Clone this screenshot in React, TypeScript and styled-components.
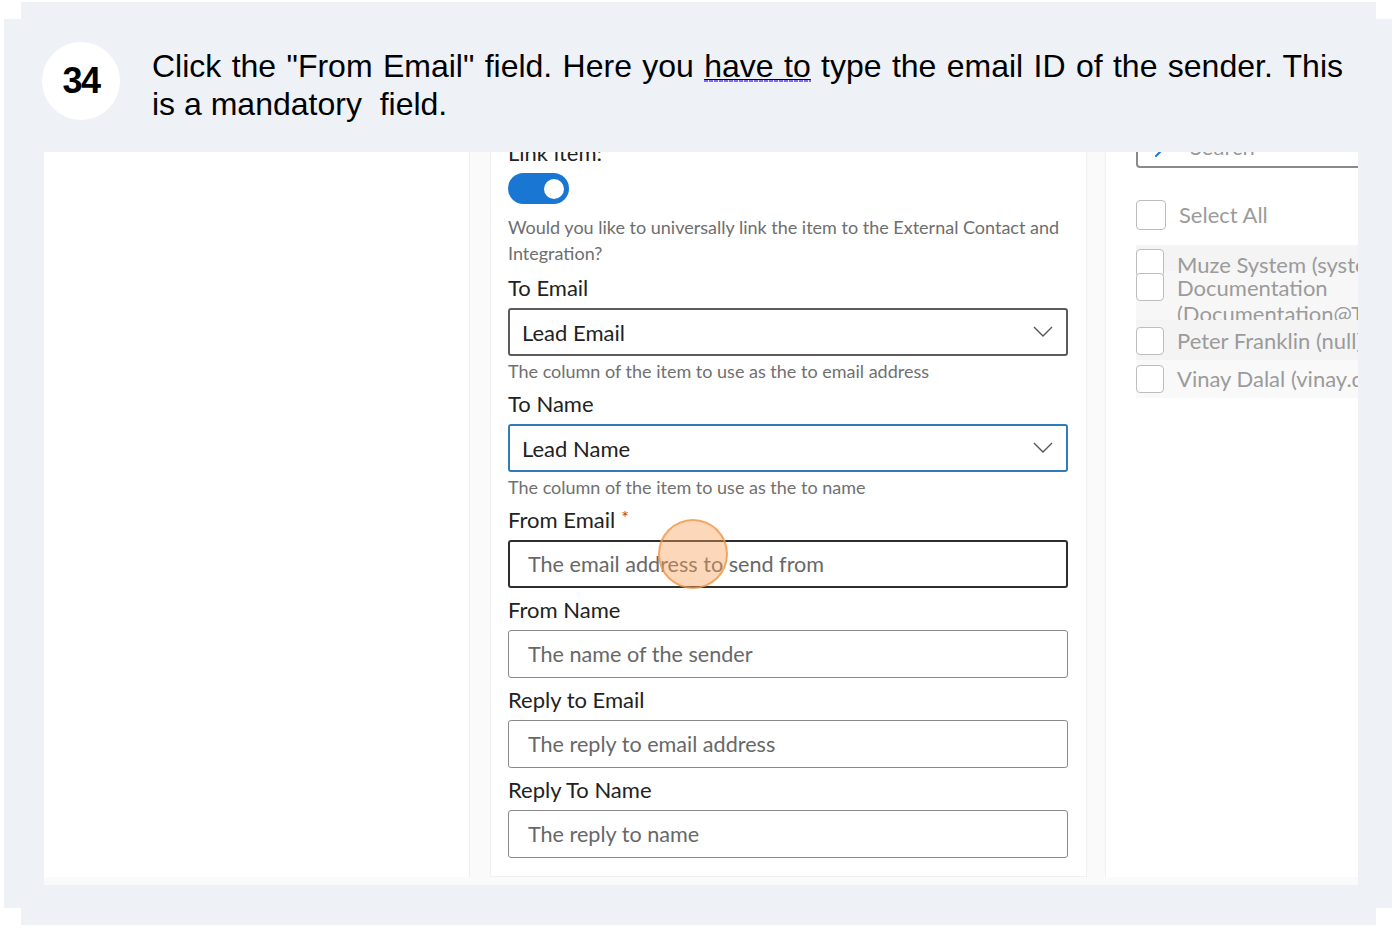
import styled, { createGlobalStyle } from "styled-components"

const GlobalStyle = createGlobalStyle`
    html, body {
        margin: 0;
        padding: 0;
        background: #fff;
    }
    body {
        font-family: Lato, "Liberation Sans", sans-serif;
    }
`

const Backdrop = styled.div`
    width: 1355px;
    margin: 2px 0 0 21px;
    padding: 17px 0;
    background: #eef2f7;
`

const Frame = styled.div`
    margin: 0 -16px 0 -17px;
    height: 889px;
    background: #eef2f7;
    display: flex;
    flex-direction: column;
`

const Header = styled.div`
    height: 133px;
    box-sizing: border-box;
    padding: 23px 49px 0 38px;
    display: flex;
    align-items: flex-start;
    gap: 32px;
`

const StepBadge = styled.div`
    width: 78px;
    height: 78px;
    flex-shrink: 0;
    border-radius: 50%;
    background: #fff;
    display: flex;
    align-items: center;
    justify-content: center;
    font-family: "Liberation Sans", Arial, sans-serif;
    font-weight: bold;
    font-size: 36px;
    letter-spacing: -1.5px;
    color: #000;
`

const Instruction = styled.p`
    flex: 1;
    margin: 5px 0 0;
    font-family: "Liberation Sans", Arial, sans-serif;
    font-size: 32px;
    line-height: 38px;
    text-align: justify;
    color: #000;
`

const Marked = styled.span`
    text-decoration: underline;
    text-decoration-thickness: 1px;
    text-underline-offset: 2px;
    background-image: repeating-linear-gradient(90deg, #7b6cf2 0 4px, transparent 4px 5px);
    background-repeat: no-repeat;
    background-size: 100% 3px;
    background-position: 0 calc(100% - 2px);
`

const Shot = styled.div`
    margin: 0 34px 0 40px;
    height: 733px;
    overflow: hidden;
    background: #fafafa;
    display: flex;
    align-items: flex-start;
`

const LeftPanel = styled.div`
    width: 426px;
    height: 725px;
    flex-shrink: 0;
    box-sizing: border-box;
    background: #fff;
    border-right: 1px solid #efefef;
`

const FormPanel = styled.div`
    width: 597px;
    height: 725px;
    flex-shrink: 0;
    margin-left: 20px;
    box-sizing: border-box;
    background: #fff;
    border: 1px solid #f0f0f0;
    border-top: none;
    padding: 0 18px 0 17px;
    overflow: hidden;
`

const Form = styled.div`
    margin-top: -21px;
    display: flex;
    flex-direction: column;
`

const Label = styled.div`
    font-size: 22px;
    line-height: 24px;
    color: #222;
    margin: 10px 0 8px;
`

const Required = styled.span`
    color: #c0392b;
    font-size: 18px;
    vertical-align: top;
    margin-left: 6px;
    line-height: 18px;
`

const Toggle = styled.div`
    width: 61px;
    height: 31px;
    box-sizing: border-box;
    border-radius: 16px;
    background: #1976d2;
    display: flex;
    align-items: center;
    justify-content: flex-end;
    padding-right: 5px;
`

const Knob = styled.span`
    width: 20px;
    height: 20px;
    border-radius: 50%;
    background: #fff;
`

const Description = styled.div`
    margin-top: 10px;
    font-size: 18px;
    line-height: 26px;
    color: #6e6e6e;
`

const Helper = styled.div`
    margin-top: 4px;
    font-size: 18px;
    line-height: 22px;
    color: #707070;
`

const Select = styled.div<{ $focused?: boolean }>`
    height: 48px;
    box-sizing: border-box;
    border: 2px solid ${p => p.$focused ? "#2e7db9" : "#5c5c5c"};
    border-radius: 3px;
    display: flex;
    align-items: center;
    justify-content: space-between;
    padding: 0 13px 0 12px;
    font-size: 22px;
    color: #222;
`

const FieldWrap = styled.div`
    position: relative;
`

const Input = styled.div<{ $strong?: boolean }>`
    height: 48px;
    box-sizing: border-box;
    border: ${p => p.$strong ? "2px solid #2e2e2e" : "1px solid #8a8a8a"};
    border-radius: 3px;
    display: flex;
    align-items: center;
    padding-left: ${p => p.$strong ? "18px" : "19px"};
    font-size: 21.6px;
    color: #686868;
`

const ClickMarker = styled.div`
    position: absolute;
    left: 150px;
    top: -21px;
    width: 70px;
    height: 70px;
    box-sizing: border-box;
    border-radius: 50%;
    background: rgba(250, 160, 90, 0.42);
    border: 2px solid rgba(240, 150, 70, 0.75);
    pointer-events: none;
`

const ListPanel = styled.div`
    width: 300px;
    height: 725px;
    flex-shrink: 0;
    margin-left: 18px;
    box-sizing: border-box;
    background: #fff;
    border-left: 1px solid #f0f0f0;
    padding-left: 30px;
    overflow: hidden;
`

const SearchBox = styled.div`
    margin-top: -32px;
    width: 300px;
    height: 48px;
    box-sizing: border-box;
    border: 2px solid #8a8a8a;
    border-radius: 4px;
    display: flex;
    align-items: flex-start;
    gap: 16px;
    padding: 16px 0 0 16px;
`

const SearchText = styled.span`
    margin-top: -4px;
    font-size: 22px;
    line-height: 26px;
    color: #9a9a9a;
`

const SelectAllRow = styled.div`
    margin-top: 32px;
    height: 30px;
    display: flex;
    align-items: center;
    gap: 13px;
`

const Checkbox = styled.span<{ $size?: number, $top?: number }>`
    flex-shrink: 0;
    width: ${p => p.$size ?? 28}px;
    height: ${p => p.$size ?? 28}px;
    margin-top: ${p => p.$top ?? 0}px;
    box-sizing: border-box;
    border: 1.5px solid #bdbdbd;
    border-radius: 4px;
    background: #fff;
`

const ItemText = styled.span<{ $pad?: number }>`
    padding-top: ${p => p.$pad ?? 0}px;
    font-size: 22px;
    line-height: 26px;
    color: #9b9b9b;
    white-space: nowrap;
`

const List = styled.div`
    margin-top: 15px;
    width: 420px;
    background: #f6f6f6;
`

const Row = styled.div<{ $h: number, $clip?: boolean, $shade?: string }>`
    height: ${p => p.$h}px;
    overflow: ${p => p.$clip ? "hidden" : "visible"};
    background: ${p => p.$shade ?? "#f4f4f4"};
    display: flex;
    align-items: flex-start;
    gap: 13px;
`

function Chevron() {
    return (
        <svg width="20" height="12" viewBox="0 0 20 12">
            <polyline points="1,1 10,10 19,1" fill="none" stroke="#555" strokeWidth="1.4" />
        </svg>
    )
}

function SearchGlyph() {
    return (
        <svg width="20" height="20" viewBox="0 0 20 20" style={{ flexShrink: 0 }}>
            <circle cx="13" cy="7" r="6" fill="none" stroke="#1976d2" strokeWidth="2" />
            <line x1="8.5" y1="11.5" x2="2" y2="18" stroke="#1976d2" strokeWidth="2" strokeLinecap="round" />
        </svg>
    )
}

export default function App() {
    return (
        <>
            <GlobalStyle />
            <Backdrop>
                <Frame>
                    <Header>
                        <StepBadge>34</StepBadge>
                        <Instruction>
                            Click the "From Email" field. Here you <Marked>have to</Marked> type the email ID of the sender. This is a mandatory{"\u00a0"} field.
                        </Instruction>
                    </Header>
                    <Shot>
                        <LeftPanel />
                        <FormPanel>
                            <Form>
                                <Label>Link item:</Label>
                                <Toggle><Knob /></Toggle>
                                <Description>
                                    Would you like to universally link the item to the External Contact and Integration?
                                </Description>

                                <Label>To Email</Label>
                                <Select>
                                    <span>Lead Email</span>
                                    <Chevron />
                                </Select>
                                <Helper>The column of the item to use as the to email address</Helper>

                                <Label>To Name</Label>
                                <Select $focused>
                                    <span>Lead Name</span>
                                    <Chevron />
                                </Select>
                                <Helper>The column of the item to use as the to name</Helper>

                                <Label>From Email<Required>*</Required></Label>
                                <FieldWrap>
                                    <Input $strong>The email address to send from</Input>
                                    <ClickMarker />
                                </FieldWrap>

                                <Label>From Name</Label>
                                <Input>The name of the sender</Input>

                                <Label>Reply to Email</Label>
                                <Input>The reply to email address</Input>

                                <Label>Reply To Name</Label>
                                <Input>The reply to name</Input>
                            </Form>
                        </FormPanel>
                        <ListPanel>
                            <SearchBox>
                                <SearchGlyph />
                                <SearchText>Search</SearchText>
                            </SearchBox>
                            <SelectAllRow>
                                <Checkbox $size={30} />
                                <ItemText>Select All</ItemText>
                            </SelectAllRow>
                            <List>
                                <Row $h={26}>
                                    <Checkbox $top={4} />
                                    <ItemText $pad={7}>Muze System (system@muze.nl)</ItemText>
                                </Row>
                                <Row $h={49} $clip $shade="#f7f7f7">
                                    <Checkbox $top={2} />
                                    <ItemText $pad={4}>
                                        Documentation<br />(Documentation@Tapart.com)
                                    </ItemText>
                                </Row>
                                <Row $h={40} $clip>
                                    <Checkbox $top={7} />
                                    <ItemText $pad={8}>Peter Franklin (null)</ItemText>
                                </Row>
                                <Row $h={38} $clip $shade="#f9f9f9">
                                    <Checkbox $top={5} />
                                    <ItemText $pad={6}>Vinay Dalal (vinay.dalal@muze.nl)</ItemText>
                                </Row>
                            </List>
                        </ListPanel>
                    </Shot>
                </Frame>
            </Backdrop>
        </>
    )
}
